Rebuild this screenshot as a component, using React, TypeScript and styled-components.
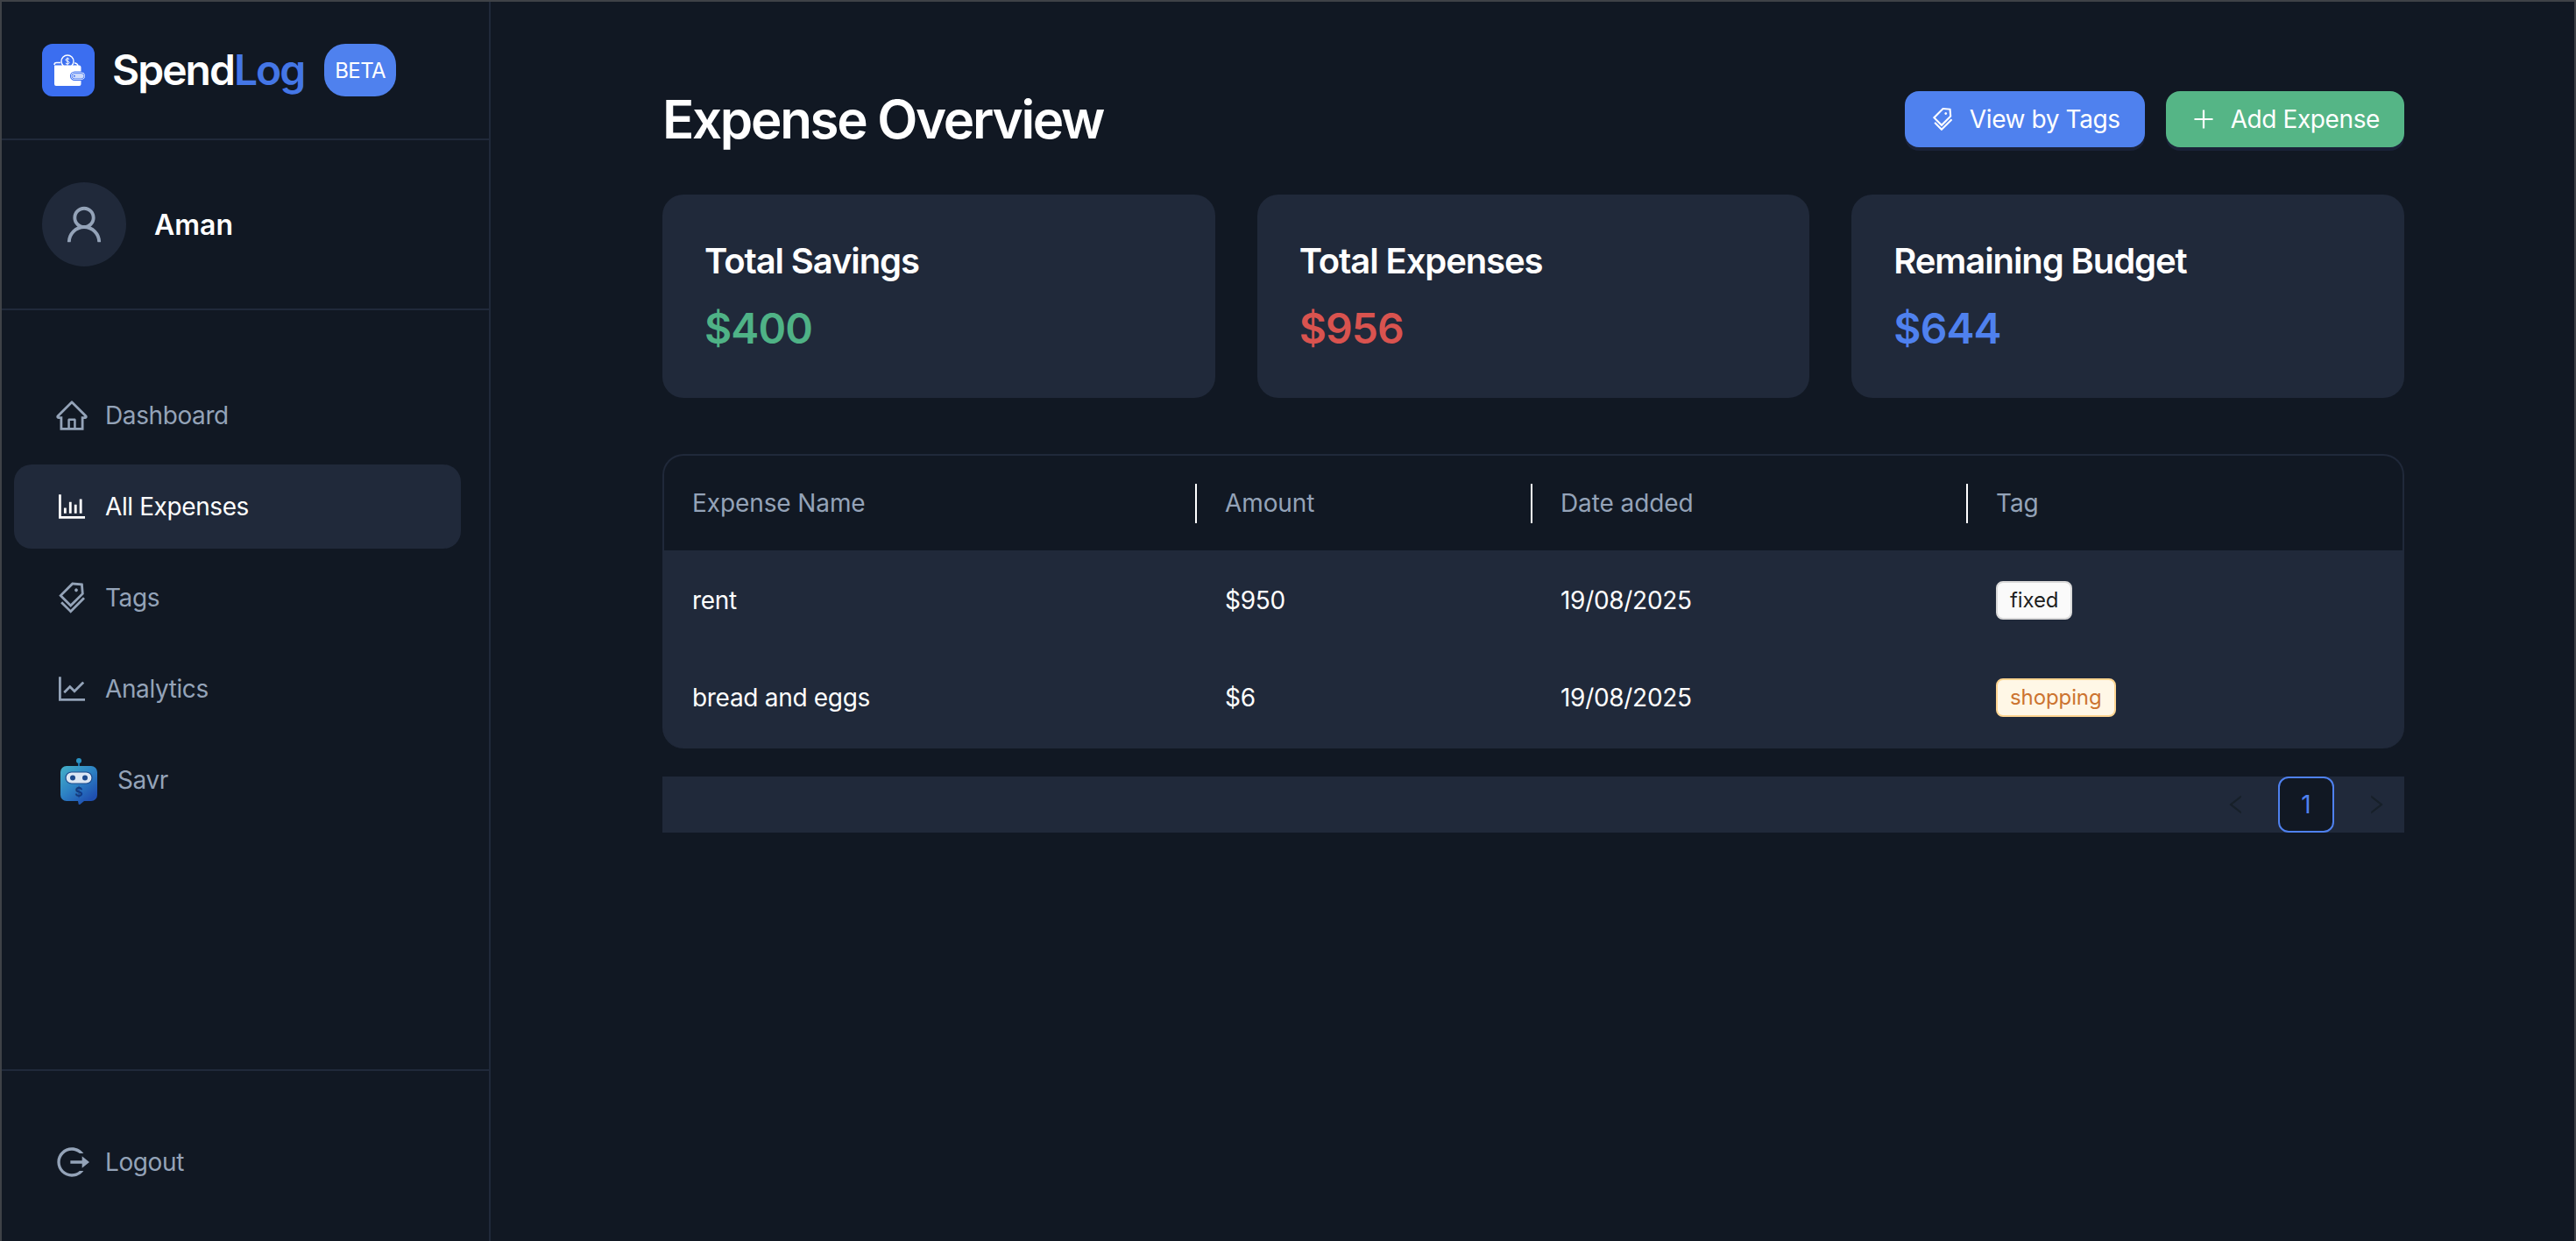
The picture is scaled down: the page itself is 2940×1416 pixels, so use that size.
import React from 'react';
import styled, { createGlobalStyle } from 'styled-components';
import {
  AiOutlineBarChart,
  AiOutlineHome,
  AiOutlineLeft,
  AiOutlineLineChart,
  AiOutlinePlus,
  AiOutlineRight,
  AiOutlineTags,
  AiOutlineUser
} from 'react-icons/ai';
import { RiLogoutCircleRLine } from 'react-icons/ri';

const PAGE_BG = '#111823';
const PANEL_BG = '#20293a';

const GlobalStyle = createGlobalStyle`
  html, body {
    margin: 0;
    padding: 0;
    background: ${PAGE_BG};
  }
  body {
    font-family: Inter, "Noto Sans", sans-serif;
    color: #fff;
  }
  * {
    box-sizing: border-box;
  }
`;

const expenses = [
  { name: 'rent', amount: '$950', date: '19/08/2025', tag: 'fixed' },
  { name: 'bread and eggs', amount: '$6', date: '19/08/2025', tag: 'shopping' }
];

const stats = [
  { title: 'Total Savings', value: '$400', color: '#4fb286' },
  { title: 'Total Expenses', value: '$956', color: '#d9534f' },
  { title: 'Remaining Budget', value: '$644', color: '#4f81ee' }
];

const WalletLogo = () => (
  <svg width="60" height="60" viewBox="0 0 60 60" fill="none">
    <rect width="60" height="60" rx="12" fill="#3b6ef0" />
    <circle cx="29" cy="20" r="7" fill="#3b6ef0" stroke="#fff" strokeWidth="1.4" />
    <path d="M29 15.5v9M31.2 17.6c-.6-.9-3.9-1.2-4.3.5-.4 2 4.5 1.4 4.3 3.5-.2 1.7-3.8 1.5-4.5.4" stroke="#fff" strokeWidth="1" />
    <path d="M14 24a2.5 2.5 0 0 1 2.5-2.5H21M37 22a4 4 0 0 1 4 3" stroke="#fff" strokeWidth="1.4" />
    <path d="M14 24.5h28a2.5 2.5 0 0 1 2.5 2.5v19a2 2 0 0 1-2 2H16a2 2 0 0 1-2-2z" fill="#fff" />
    <rect x="32.5" y="32" width="17" height="9.5" rx="4.7" fill="#fff" stroke="#3b6ef0" strokeWidth="1.2" />
    <rect x="34" y="33.6" width="14" height="6.3" rx="3.1" fill="#cfdcfb" stroke="#3b6ef0" strokeWidth=".8" />
    <circle cx="36.8" cy="36.7" r="1" fill="#3b6ef0" />
  </svg>
);

const SavrBot = () => (
  <svg width="56" height="56" viewBox="0 0 56 56" fill="none">
    <defs>
      <linearGradient id="botBody" x1="8" y1="9" x2="42" y2="50" gradientUnits="userSpaceOnUse">
        <stop offset="0" stopColor="#46b4c8" />
        <stop offset="0.55" stopColor="#2d82c4" />
        <stop offset="1" stopColor="#1f4fb0" />
      </linearGradient>
    </defs>
    <path d="M27 9h2v5h-2z" fill="#1c6fa8" />
    <circle cx="28" cy="6" r="3" fill="#2a93c4" />
    <path d="M14 12h28a7 7 0 0 1 7 7v26a7 7 0 0 1-7 7h-8l-6 5-1-5H14a7 7 0 0 1-7-7V19a7 7 0 0 1 7-7z" fill="url(#botBody)" />
    <rect x="13" y="19" width="30" height="13" rx="6.5" fill="#dbe6f3" stroke="#1e4c8e" strokeWidth="1.2" />
    <circle cx="21" cy="25.5" r="3" fill="#1d4a8c" />
    <circle cx="35" cy="25.5" r="3" fill="#1d4a8c" />
    <text x="28" y="47" textAnchor="middle" fontFamily="Inter, sans-serif" fontSize="14" fontWeight="700" fill="#123a80">$</text>
  </svg>
);

const App: React.FC = () => {
  return (
    <>
      <GlobalStyle />
      <Shell>
        <Sidebar>
          <Brand>
            <WalletLogo />
            <BrandName>
              Spend<BrandAccent>Log</BrandAccent>
            </BrandName>
            <BetaBadge>BETA</BetaBadge>
          </Brand>
          <Profile>
            <Avatar>
              <AiOutlineUser />
            </Avatar>
            <ProfileName>Aman</ProfileName>
          </Profile>
          <Nav>
            <NavItem>
              <NavIcon><AiOutlineHome /></NavIcon>
              Dashboard
            </NavItem>
            <NavItem $active>
              <NavIcon><AiOutlineBarChart /></NavIcon>
              All Expenses
            </NavItem>
            <NavItem>
              <NavIcon><AiOutlineTags /></NavIcon>
              Tags
            </NavItem>
            <NavItem>
              <NavIcon><AiOutlineLineChart /></NavIcon>
              Analytics
            </NavItem>
            <NavItem $bot>
              <SavrBot />
              Savr
            </NavItem>
          </Nav>
          <SidebarFooter>
            <NavItem>
              <NavIcon><RiLogoutCircleRLine /></NavIcon>
              Logout
            </NavItem>
          </SidebarFooter>
        </Sidebar>
        <Main>
          <PageHeader>
            <PageTitle>Expense Overview</PageTitle>
            <HeaderActions>
              <ActionButton $color="#4f81ee">
                <AiOutlineTags />
                View by Tags
              </ActionButton>
              <ActionButton $color="#55b586">
                <AiOutlinePlus />
                Add Expense
              </ActionButton>
            </HeaderActions>
          </PageHeader>
          <StatGrid>
            {stats.map((stat) => (
              <StatCard key={stat.title}>
                <StatTitle>{stat.title}</StatTitle>
                <StatValue $color={stat.color}>{stat.value}</StatValue>
              </StatCard>
            ))}
          </StatGrid>
          <TableWrap>
            <ExpenseTable>
              <colgroup>
                <col width="608" />
                <col width="383" />
                <col width="497" />
                <col />
              </colgroup>
              <thead>
                <tr>
                  <HeadCell>Expense Name</HeadCell>
                  <HeadCell>Amount</HeadCell>
                  <HeadCell>Date added</HeadCell>
                  <HeadCell>Tag</HeadCell>
                </tr>
              </thead>
              <tbody>
                {expenses.map((expense) => (
                  <BodyRow key={expense.name}>
                    <BodyCell>{expense.name}</BodyCell>
                    <BodyCell>{expense.amount}</BodyCell>
                    <BodyCell>{expense.date}</BodyCell>
                    <BodyCell>
                      <TagPill $orange={expense.tag === 'shopping'}>{expense.tag}</TagPill>
                    </BodyCell>
                  </BodyRow>
                ))}
              </tbody>
            </ExpenseTable>
          </TableWrap>
          <Pagination>
            <PageArrow><AiOutlineLeft /></PageArrow>
            <PageNumber>1</PageNumber>
            <PageArrow><AiOutlineRight /></PageArrow>
          </Pagination>
        </Main>
      </Shell>
    </>
  );
};

// Styled Components
const Shell = styled.div`
  display: flex;
  height: 1416px;
  overflow: hidden;
  background: ${PAGE_BG};
  border-top: 2px solid #3f4247;
  border-left: 2px solid #3f4247;
  border-right: 2px solid #3f4247;
`;

const Sidebar = styled.aside`
  display: flex;
  flex-direction: column;
  flex: 0 0 558px;
  border-right: 2px solid ${PANEL_BG};
`;

const Brand = styled.div`
  display: flex;
  align-items: center;
  gap: 20px;
  height: 158px;
  padding: 0 46px;
  flex: none;
  border-bottom: 2px solid ${PANEL_BG};
`;

const BrandName = styled.div`
  font-size: 48px;
  font-weight: 600;
  line-height: 60px;
  letter-spacing: -2px;
`;

const BrandAccent = styled.span`
  color: #4476e6;
`;

const BetaBadge = styled.span`
  display: flex;
  align-items: center;
  height: 60px;
  margin-left: 3px;
  padding: 0 12px;
  border-radius: 24px;
  background: #4f81ee;
  font-size: 24px;
  letter-spacing: -0.6px;
`;

const Profile = styled.div`
  display: flex;
  align-items: center;
  gap: 32px;
  height: 194px;
  padding: 0 46px;
  flex: none;
  border-bottom: 2px solid ${PANEL_BG};
`;

const Avatar = styled.div`
  display: flex;
  align-items: center;
  justify-content: center;
  width: 96px;
  height: 96px;
  border-radius: 50%;
  background: ${PANEL_BG};
  color: #94a3b8;
  font-size: 52px;
`;

const ProfileName = styled.div`
  font-size: 32px;
  font-weight: 600;
`;

const Nav = styled.nav`
  display: flex;
  flex-direction: column;
  gap: 8px;
  flex: 1;
  padding: 72px 32px 0 14px;
`;

const NavItem = styled.div<{ $active?: boolean; $bot?: boolean }>`
  display: flex;
  align-items: center;
  gap: ${(p) => (p.$bot ? '16px' : '18px')};
  height: 96px;
  padding-left: 46px;
  border-radius: 20px;
  font-size: 28px;
  letter-spacing: -0.4px;
  background: ${(p) => (p.$active ? PANEL_BG : 'transparent')};
  color: ${(p) => (p.$active ? '#fff' : '#94a3b8')};
`;

const NavIcon = styled.span`
  display: flex;
  font-size: 40px;
`;

const SidebarFooter = styled.div`
  flex: none;
  height: 196px;
  padding: 56px 32px 0 14px;
  border-top: 2px solid ${PANEL_BG};
`;

const Main = styled.main`
  flex: 1;
  padding: 102px 194px 0 196px;
`;

const PageHeader = styled.div`
  display: flex;
  align-items: center;
  justify-content: space-between;
  height: 64px;
  margin-bottom: 54px;
`;

const PageTitle = styled.h1`
  margin: 0;
  font-size: 60px;
  font-weight: 600;
  letter-spacing: -2.3px;
`;

const HeaderActions = styled.div`
  display: flex;
  gap: 24px;
`;

const ActionButton = styled.button<{ $color: string }>`
  display: flex;
  align-items: center;
  gap: 16px;
  height: 64px;
  padding: 0 28px;
  border: none;
  border-radius: 16px;
  background: ${(p) => p.$color};
  box-shadow: 0 4px 0 #1a2238;
  color: #fff;
  font-family: inherit;
  font-size: 28px;
  letter-spacing: -0.4px;

  svg {
    font-size: 30px;
  }
`;

const StatGrid = styled.div`
  display: grid;
  grid-template-columns: repeat(3, 1fr);
  gap: 48px;
`;

const StatCard = styled.div`
  height: 232px;
  padding: 48px;
  border-radius: 24px;
  background: ${PANEL_BG};
`;

const StatTitle = styled.div`
  font-size: 40px;
  font-weight: 600;
  line-height: 56px;
  letter-spacing: -1.1px;
`;

const StatValue = styled.div<{ $color: string }>`
  margin-top: 21px;
  font-size: 48px;
  font-weight: 600;
  line-height: 56px;
  letter-spacing: -0.9px;
  color: ${(p) => p.$color};
`;

const TableWrap = styled.div`
  margin-top: 64px;
  overflow: hidden;
  border: 2px solid ${PANEL_BG};
  border-bottom: none;
  border-radius: 24px;
  background: ${PANEL_BG};
`;

const ExpenseTable = styled.table`
  width: 100%;
  border-collapse: collapse;
  table-layout: fixed;
`;

const HeadCell = styled.th`
  position: relative;
  height: 108px;
  padding: 0 32px;
  background: ${PAGE_BG};
  color: #94a3b8;
  font-size: 28px;
  font-weight: 400;
  letter-spacing: -0.1px;
  text-align: left;

  &:not(:first-child)::before {
    content: '';
    position: absolute;
    left: -2px;
    top: 32px;
    width: 2px;
    height: 45px;
    background: #fff;
  }
`;

const BodyRow = styled.tr`
  &:last-child td {
    padding-bottom: 3px;
  }
`;

const BodyCell = styled.td`
  height: 113px;
  padding: 0 32px;
  color: #fff;
  font-size: 28px;
  letter-spacing: -0.3px;
`;

const TagPill = styled.span<{ $orange?: boolean }>`
  display: block;
  width: fit-content;
  height: 44px;
  padding: 0 14px;
  border: 2px solid ${(p) => (p.$orange ? '#ffd591' : '#d9d9d9')};
  border-radius: 8px;
  background: ${(p) => (p.$orange ? '#fff7e6' : '#fafafa')};
  color: ${(p) => (p.$orange ? '#cc7430' : 'rgba(0, 0, 0, 0.88)')};
  font-size: 24px;
  letter-spacing: -0.1px;
  line-height: 40px;
`;

const Pagination = styled.div`
  display: flex;
  justify-content: flex-end;
  gap: 16px;
  height: 64px;
  margin-top: 32px;
  background: ${PANEL_BG};
`;

const PageArrow = styled.div`
  display: flex;
  align-items: center;
  justify-content: center;
  width: 64px;
  height: 64px;
  color: #172029;
  font-size: 28px;
`;

const PageNumber = styled.div`
  display: flex;
  align-items: center;
  justify-content: center;
  width: 64px;
  height: 64px;
  border: 2px solid #4f81ee;
  border-radius: 12px;
  background: ${PAGE_BG};
  color: #4f81ee;
  font-size: 28px;
`;

export default App;
